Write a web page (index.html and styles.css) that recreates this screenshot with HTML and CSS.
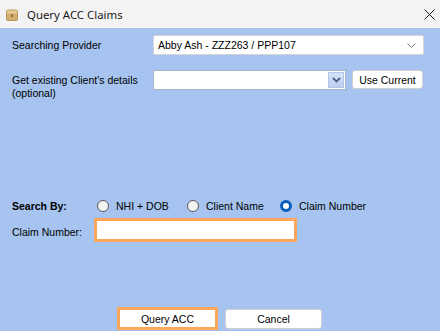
FILE: index.html
```html
<!DOCTYPE html>
<html lang="en">
<head>
  <meta charset="UTF-8">
  <title>Query ACC Claims</title>
  <link rel="stylesheet" href="styles.css">
</head>
<body>
<div class="window">
  <div class="titlebar">
    <svg class="app-icon" width="12" height="12" viewBox="0 0 12 12">
      <rect x="0.5" y="1" width="11" height="10.5" rx="1.5" fill="#d2ad70" stroke="#b8965c"/>
      <rect x="1" y="1.5" width="10" height="3" fill="#e6cb98"/>
      <rect x="5" y="5" width="2" height="3" fill="#94733e"/>
    </svg>
    <span class="title">Query ACC Claims</span>
    <svg class="close" width="11" height="11" viewBox="0 0 11 11">
      <path d="M0.5 0.5 L10.5 10.5 M10.5 0.5 L0.5 10.5" stroke="#1b1b1b" stroke-width="1"/>
    </svg>
  </div>

  <div class="content">
    <div class="row row-provider">
      <label class="field-label">Searching Provider</label>
      <div class="combo combo-flat">
        <span class="combo-text">Abby Ash - ZZZ263 / PPP107</span>
        <svg class="chev" width="9" height="6" viewBox="0 0 9 6">
          <path d="M0.5 0.5 L4.5 4.5 L8.5 0.5" fill="none" stroke="#7a7a7a" stroke-width="1"/>
        </svg>
      </div>
    </div>

    <div class="row row-client">
      <label class="field-label two-line">Get existing Client's details<br>(optional)</label>
      <div class="combo combo-classic">
        <span class="drop-btn">
          <svg width="9" height="6" viewBox="0 0 9 6">
            <path d="M1 1 L4.5 4.5 L8 1" fill="none" stroke="#4a5f86" stroke-width="1.8"/>
          </svg>
        </span>
      </div>
      <button class="btn btn-use">Use Current</button>
    </div>

    <div class="search-by">
      <span class="search-label">Search By:</span>
      <span class="radio-opt opt-nhi"><span class="radio"></span>NHI + DOB</span>
      <span class="radio-opt opt-name"><span class="radio"></span>Client Name</span>
      <span class="radio-opt"><span class="radio checked"></span>Claim Number</span>
    </div>

    <div class="claim-row">
      <label class="claim-label">Claim Number:</label>
      <input class="claim-input" type="text">
    </div>

    <div class="actions">
      <button class="btn btn-query">Query ACC</button>
      <button class="btn btn-cancel">Cancel</button>
    </div>
  </div>
</div>
</body>
</html>
```

FILE: styles.css
```css
html, body {
  margin: 0;
  padding: 0;
  height: 100%;
}

body {
  font-family: "Liberation Sans", Arial, sans-serif;
  font-size: 10.5px;
  color: #000;
  background: #a6c4ef;
}

.window {
  height: 331px;
  display: flex;
  flex-direction: column;
  overflow: hidden;
}

.titlebar {
  height: 28px;
  flex: 0 0 28px;
  background: #f3f3f3;
  display: flex;
  align-items: center;
  padding: 0 5px 0 6px;
  box-sizing: border-box;
}

.app-icon {
  margin-right: 9px;
  margin-top: 1px;
}

.title {
  font-family: "Noto Sans", "Open Sans", sans-serif;
  font-size: 11.4px;
  color: #1a1a1a;
  flex: 1;
}

.row {
  display: flex;
}

.content {
  flex: 1;
  display: flex;
  flex-direction: column;
  padding-left: 12px;
}

.field-label {
  width: 141px;
  flex: 0 0 141px;
  line-height: 13px;
}

.row-provider {
  margin-top: 7px;
  height: 20px;
  align-items: center;
}

.row-client {
  margin-top: 15px;
  height: 31px;
  align-items: flex-start;
}

.two-line {
  padding-top: 4px;
}

.combo {
  box-sizing: border-box;
  height: 20px;
  background: #fff;
  display: flex;
  align-items: center;
}

.combo-flat {
  width: 271px;
  border: 1px solid #d5d5d5;
  border-radius: 2px;
  padding: 0 7px 0 4px;
}

.combo-text {
  flex: 1;
}

.chev {
  margin-top: 1px;
}

.combo-classic {
  width: 193px;
  border: 1px solid #a9b6c9;
  justify-content: flex-end;
  padding-right: 1px;
}

.drop-btn {
  width: 16px;
  height: 16px;
  box-sizing: border-box;
  border: 1px solid #b3c4e6;
  background: linear-gradient(#d6e2f8, #bccff2);
  display: flex;
  align-items: center;
  justify-content: center;
}

.btn {
  font-family: "Liberation Sans", Arial, sans-serif;
  font-size: 10.5px;
  color: #000;
  background: #fff;
  border: 1px solid #d0d0d0;
  border-radius: 3px;
  padding: 0;
  box-sizing: border-box;
}

.btn-use {
  width: 71px;
  height: 19px;
  margin-left: 6px;
}

.search-by {
  margin-top: 98px;
  height: 14px;
  display: flex;
  align-items: center;
}

.search-label {
  font-weight: bold;
  width: 85px;
  flex: 0 0 85px;
}

.radio-opt {
  display: flex;
  align-items: center;
}

.opt-nhi {
  width: 90px;
}

.opt-name {
  width: 93px;
}

.radio {
  width: 12px;
  height: 12px;
  box-sizing: border-box;
  border-radius: 50%;
  border: 1px solid #5a5a5a;
  background: #f4f4f4;
  margin-right: 7px;
}

.radio.checked {
  border: 3.5px solid #0a5cb8;
  background: #fff;
}

.claim-row {
  margin-top: 5px;
  display: flex;
  align-items: center;
}

.claim-label {
  width: 82px;
  flex: 0 0 82px;
  margin-top: 4px;
}

.claim-input {
  width: 203px;
  height: 24px;
  box-sizing: border-box;
  border: 3px solid #fba65a;
  background: #fff;
  margin: 0;
  padding: 0 3px;
  outline: none;
}

.actions {
  margin-top: auto;
  margin-bottom: 1px;
  padding-left: 105px;
  display: flex;
  align-items: center;
}

.btn-query {
  width: 101px;
  height: 23px;
  border: 3px solid #fba65a;
  border-radius: 0;
}

.btn-cancel {
  width: 97px;
  height: 20px;
  margin-left: 7px;
}
```
